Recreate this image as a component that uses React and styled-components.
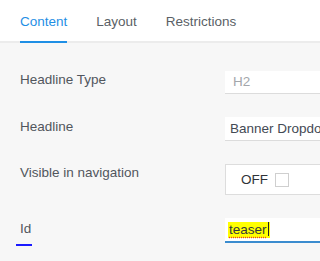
import React from "react";
import styled, { createGlobalStyle } from "styled-components";

const GlobalStyle = createGlobalStyle`
    html, body {
        margin: 0;
        padding: 0;
        width: 100%;
        overflow: hidden;
        background: #f7f7f7;
        font-family: "Liberation Sans", Arial, sans-serif;
        font-size: 13.5px;
    }
`;

const App = () => {
    return (
        <Page>
            <GlobalStyle />
            <TabBar>
                <Tab active>Content</Tab>
                <Tab>Layout</Tab>
                <Tab>Restrictions</Tab>
            </TabBar>
            <Form>
                <Row>
                    <Label offset={1}>Headline Type</Label>
                    <SelectField>H2</SelectField>
                </Row>
                <Row>
                    <Label offset={2}>Headline</Label>
                    <TextField>Banner Dropdown</TextField>
                </Row>
                <Row>
                    <Label offset={1}>Visible in navigation</Label>
                    <ToggleBox>
                        <ToggleText>OFF</ToggleText>
                        <CheckBox />
                    </ToggleBox>
                </Row>
                <Row>
                    <Label offset={3} focused>
                        Id
                    </Label>
                    <TextField focused>
                        <Marked>
                            teaser
                            <Caret />
                        </Marked>
                    </TextField>
                </Row>
            </Form>
        </Page>
    );
};

const Page = styled.div`
    width: 100%;
    min-height: 261px;
    overflow: hidden;
`;

const TabBar = styled.div`
    display: flex;
    gap: 29px;
    height: 41px;
    padding-left: 20px;
    background: #ffffff;
    border-bottom: 2px solid #ececec;
`;

const Tab = styled.div`
    padding-top: 3px;
    height: 38px;
    line-height: 38px;
    color: ${(p) => (p.active ? "#1f8fe5" : "#5a5f66")};
    border-bottom: 2px solid ${(p) => (p.active ? "#1f8fe5" : "transparent")};
    margin-bottom: -2px;
    white-space: nowrap;
`;

const Form = styled.div`
    display: flex;
    flex-direction: column;
    gap: 23px;
    padding-top: 28px;
`;

const Row = styled.div`
    display: flex;
    align-items: flex-start;
`;

const Label = styled.div`
    flex: 0 0 205px;
    padding-left: 20px;
    padding-top: ${(p) => p.offset}px;
    line-height: 16px;
    color: #51565d;
    white-space: nowrap;

    &::after {
        content: "";
        display: ${(p) => (p.focused ? "block" : "none")};
        width: 16px;
        height: 2px;
        margin-left: -4px;
        margin-top: 7px;
        background: #1a1aff;
    }
`;

const SelectField = styled.div`
    flex: 1 1 0;
    min-width: 0;
    height: 22px;
    line-height: 22px;
    padding-left: 8px;
    background: #ffffff;
    border-bottom: 1px solid #dcdcdc;
    color: #a3a6ab;
`;

const TextField = styled.div`
    flex: 1 1 0;
    min-width: 0;
    height: 23px;
    line-height: 23px;
    padding-left: ${(p) => (p.focused ? "3px" : "5px")};
    background: #ffffff;
    border-bottom: ${(p) => (p.focused ? "2px solid #3b8ccf" : "1px solid #dcdcdc")};
    color: #434a54;
    white-space: nowrap;
    overflow: hidden;
`;

const ToggleBox = styled.div`
    flex: 1 1 0;
    min-width: 0;
    display: flex;
    align-items: center;
    height: 29px;
    padding-left: 15px;
    background: #ffffff;
    border: 1px solid #dddddd;
    border-right: none;
`;

const ToggleText = styled.span`
    color: #2f3338;
    margin-right: 7px;
`;

const CheckBox = styled.span`
    display: inline-block;
    flex-shrink: 0;
    box-sizing: border-box;
    width: 14px;
    height: 14px;
    border: 1px solid #cfcfcf;
    background: #ffffff;
`;

const Marked = styled.span`
    display: inline-block;
    line-height: 16px;
    padding: 0 1px 0 1px;
    background: #ffff00;
    color: #33373c;
    text-decoration: underline dotted #e53935;
    text-underline-offset: 3px;
`;

const Caret = styled.span`
    display: inline-block;
    width: 1px;
    height: 14px;
    margin-left: 1px;
    vertical-align: -2px;
    background: #222222;
`;

export default App;
